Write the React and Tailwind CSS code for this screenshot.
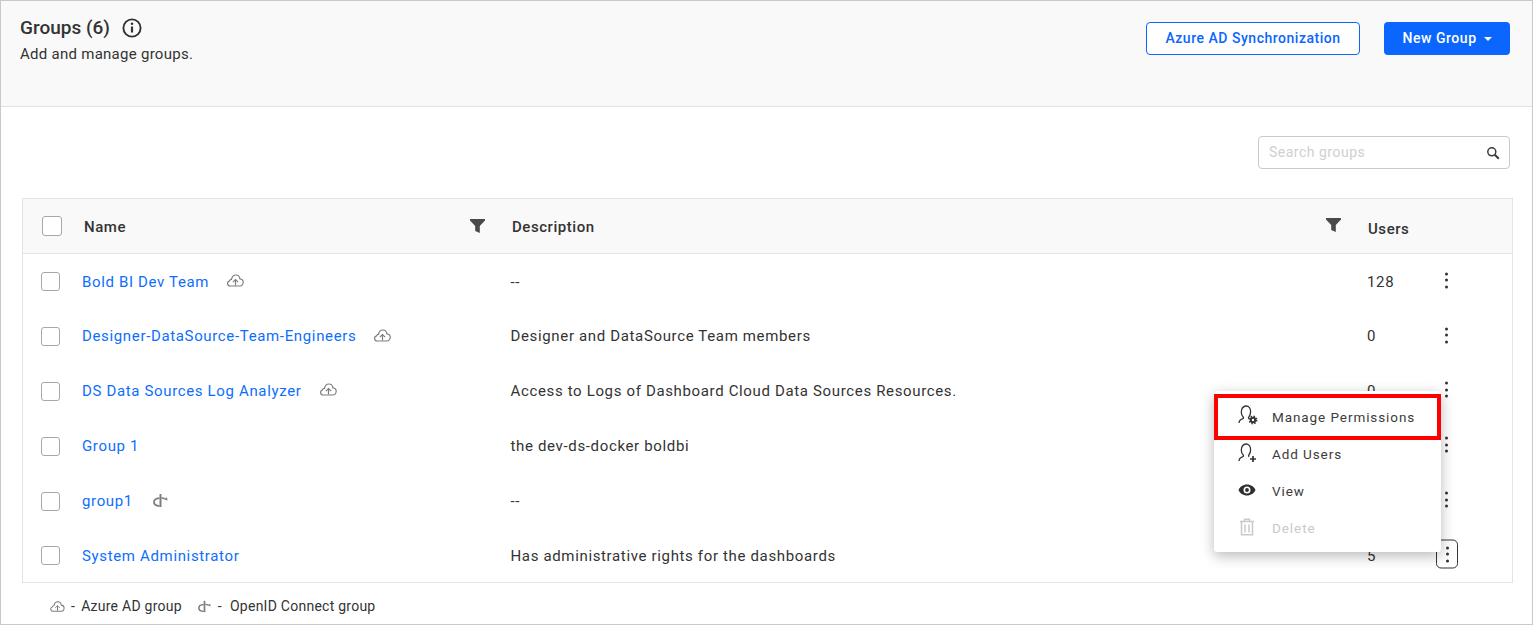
import React from "react";

const groups = [
  { name: "Bold BI Dev Team", type: "azure", description: "--", users: "128" },
  { name: "Designer-DataSource-Team-Engineers", type: "azure", description: "Designer and DataSource Team members", users: "0" },
  { name: "DS Data Sources Log Analyzer", type: "azure", description: "Access to Logs of Dashboard Cloud Data Sources Resources.", users: "0" },
  { name: "Group 1", description: "the dev-ds-docker boldbi", users: "0" },
  { name: "group1", type: "openid", description: "--", users: "0" },
  { name: "System Administrator", description: "Has administrative rights for the dashboards", users: "5", active: true },
];

const AzureIcon = ({ width = 17, height = 14 }) => (
  <svg width={width} height={height} viewBox="0 0 17 14" fill="none" stroke="#7d7d7d" strokeWidth="1.200">
    <path d="M3.300 12a2.600 2.600 0 0 1-.8-5.100C2.800 5.900 3.500 5.300 4.500 5.300 5 2.700 6.700 1 8.800 1c2.200 0 3.800 1.600 4.100 3.800 1.900.2 3.300 1.600 3.300 3.500S14.700 12 12.800 12z" />
    <path d="M8.500 11.500V5.500" strokeWidth="1.200" />
    <path d="M5.800 8.200l2.700-2.700 2.700 2.700" strokeWidth="1.100" />
  </svg>
);

const OpenIdIcon = ({ width = 15, height = 15 }) => (
  <svg width={width} height={height} viewBox="0 0 15 15" fill="none" stroke="#7d7d7d">
    <path d="M7.500 1v13" strokeWidth="2" />
    <path d="M6.500 5.200C3.300 5.500 1 7 1 9.100c0 2.200 2.300 3.800 5.500 4.100" strokeWidth="1.800" />
    <path d="M8.500 5c1.100 0 2.200.2 3.200.6" strokeWidth="1.600" />
    <path d="M14.500 7.500L14 4.300l-3.200 1.900z" fill="#7d7d7d" stroke="none" />
  </svg>
);

const FilterIcon = () => (
  <svg width="15" height="14" viewBox="0 0 15 14" fill="#4a4a4a">
    <path d="M0 0h15v1.500L9.800 7v7L5.200 12V7L0 1.500z" />
  </svg>
);

const Kebab = ({ active }) => (
  <div
    className={
      active
        ? "flex h-[29px] w-[22px] translate-x-[1px] flex-col items-center justify-center gap-[3.500px] rounded-[5px] border border-[#333]"
        : "flex h-[28px] w-[22px] flex-col items-center justify-center gap-[3.500px]"
    }
  >
    <span className="size-[3px] rounded-full bg-[#333]" />
    <span className="size-[3px] rounded-full bg-[#333]" />
    <span className="size-[3px] rounded-full bg-[#333]" />
  </div>
);

const PersonIcon = ({ children }) => (
  <svg width="20" height="20" viewBox="0 0 20 20" fill="none" stroke="#333" strokeWidth="1.300">
    <path d="M1 18c0-2 1.300-3.300 3.800-4.300.8-.4.900-1.100.4-1.700C4 10.800 3.300 9 3.300 7c0-3.300 1.800-6 4.700-6s4.600 2.600 4.600 5.700c0 2-.7 3.900-1.700 5.300-.5.600-.4 1.200.3 1.600" />
    {children}
  </svg>
);

const MenuItem = ({ icon, label, disabled, boxed }) => (
  <div
    className={
      boxed
        ? "-mb-[4px] flex h-[46px] items-center border-[4px] border-[#ff0000] pl-[20px] text-[#3c3c3c]"
        : disabled
          ? "flex h-[37px] items-center pl-[24px] text-[#c9c9c9]"
          : "flex h-[37px] items-center pl-[24px] text-[#3c3c3c]"
    }
  >
    <span className="flex w-[34px] -translate-y-[2px] items-center">{icon}</span>
    <span className="text-[13.500px] tracking-[0.92px]">{label}</span>
  </div>
);

function ActionMenu() {
  return (
    <div className="absolute left-[1213px] top-[390px] z-10 h-[161px] w-[227px] rounded-[3px] bg-white shadow-[0_4px_14px_rgba(0,0,0,0.28)]">
      <div className="pt-[3px]">
        <MenuItem
          boxed
          label="Manage Permissions"
          icon={
            <PersonIcon>
              <circle cx="15" cy="15" r="2.200" strokeWidth="2" />
              <circle cx="15" cy="15" r="3.800" strokeWidth="1.300" strokeDasharray="1.500 1.500" />
            </PersonIcon>
          }
        />
        <MenuItem
          label="Add Users"
          icon={
            <PersonIcon>
              <path d="M15 13v6M12 16h6" strokeWidth="1.700" />
            </PersonIcon>
          }
        />
        <MenuItem
          label="View"
          icon={
            <svg width="18" height="12" viewBox="0 0 18 12">
              <path
                fillRule="evenodd"
                fill="#2f2f2f"
                d="M9 .5C5 .5 2 2.800.5 6 2 9.200 5 11.500 9 11.500s7-2.300 8.500-5.500C16 2.800 13 .5 9 .5zM9 9.500a3.500 3.500 0 1 1 0-7 3.500 3.500 0 0 1 0 7z"
              />
              <circle cx="9" cy="6" r="1.900" fill="#2f2f2f" />
            </svg>
          }
        />
        <MenuItem
          disabled
          label="Delete"
          icon={
            <span className="ml-[1px]">
              <svg width="16" height="18" viewBox="0 0 16 18" fill="none" stroke="#c9c9c9" strokeWidth="1.500">
                <path d="M1 3.500h14M5.500 3V1.200h5V3M2.500 4v12.800h11V4M6 6.500v8M10 6.500v8" />
              </svg>
            </span>
          }
        />
      </div>
    </div>
  );
}

function GroupRow({ group }) {
  return (
    <div className="flex h-[54.800px] items-center text-[15px] tracking-[0.65px] text-[#333]">
      <div className="flex w-[59px] justify-center pr-[4px]">
        <span className="size-[19px] rounded-[3px] border border-[#a8a8a8] bg-white" />
      </div>
      <div className="flex w-[428.500px] items-center">
        <span className="text-[#0d6efd]">{group.name}</span>
        {group.type === "azure" && (
          <span className="ml-[18px] -translate-y-[1px]">
            <AzureIcon />
          </span>
        )}
        {group.type === "openid" && (
          <span className="ml-[20px] -translate-y-[1px]">
            <OpenIdIcon />
          </span>
        )}
      </div>
      <div className="w-[856.500px]">{group.description}</div>
      <div className="w-[68px]">{group.users}</div>
      <div className="-translate-y-[1.500px]">
        <Kebab active={group.active} />
      </div>
    </div>
  );
}

export default function App() {
  return (
    <div className="relative h-[625px] w-[1533px] overflow-hidden border border-[#c9c9c9] bg-white font-['Roboto',sans-serif] text-[#333]">
      <header className="flex h-[106px] justify-between border-b border-[#e0e0e0] bg-[#f9f9f9] pl-[19px] pr-[22px] pt-[14px]">
        <div>
          <div className="flex items-center gap-[12px]">
            <h1 className="text-[19px] font-medium leading-[26px]">Groups (6)</h1>
            <svg width="20" height="20" viewBox="0 0 20 20" fill="none" stroke="#333" strokeWidth="1.900">
              <circle cx="10" cy="10" r="8.600" />
              <path d="M10 8.500v6" strokeWidth="2.200" />
              <circle cx="10" cy="5.800" r="1.300" fill="#333" stroke="none" />
            </svg>
          </div>
          <p className="mt-[2px] text-[15px] leading-[22px] tracking-[0.27px]">Add and manage groups.</p>
        </div>
        <div className="flex gap-[24px] pt-[7px]">
          <button className="h-[33px] w-[214px] rounded-[4px] border border-[#0a66ff] bg-white text-[14px] font-medium tracking-[0.52px] text-[#0a66ff]">
            Azure AD Synchronization
          </button>
          <button className="flex h-[33px] w-[126px] items-center justify-center gap-[7px] rounded-[4px] bg-[#0a66ff] text-[14px] font-medium tracking-[0.55px] text-white">
            New Group
            <span className="mt-[1px] border-x-[4px] border-t-[4px] border-x-transparent border-t-white" />
          </button>
        </div>
      </header>

      <div className="flex justify-end pr-[22px] pt-[29px]">
        <div className="flex h-[33px] w-[252px] items-center justify-between rounded-[4px] border border-[#c9c9c9] bg-white pl-[10px] pr-[9px]">
          <span className="text-[14px] tracking-[0.5px] text-[#cfcfcf]">Search groups</span>
          <svg width="14" height="14" viewBox="0 0 14 14" fill="none" stroke="#3a3a3a">
            <circle cx="5.800" cy="5.800" r="4" strokeWidth="1.500" />
            <path d="M8.800 8.800l4 4" strokeWidth="2" />
          </svg>
        </div>
      </div>

      <div className="ml-[21px] mt-[29px] h-[385px] w-[1491px] border border-[#e3e3e3]">
        <div className="flex h-[55px] items-center border-b border-[#e3e3e3] bg-[#f9f9f9] text-[15px] font-medium tracking-[0.55px] text-[#333]">
          <div className="flex w-[61px] justify-center pr-[3px]">
            <span className="size-[20px] rounded-[3px] border border-[#a8a8a8] bg-white" />
          </div>
          <div className="flex w-[428px] items-center justify-between pr-[27px]">
            <span className="translate-y-[1px]">Name</span>
            <FilterIcon />
          </div>
          <div className="flex w-[856px] items-center justify-between pr-[27px]">
            <span className="translate-y-[1px]">Description</span>
            <span className="-translate-y-[1px]">
              <FilterIcon />
            </span>
          </div>
          <div className="translate-y-[3px]">Users</div>
        </div>
        <div className="pt-[0.5px]">
          {groups.map((group) => (
            <GroupRow key={group.name} group={group} />
          ))}
        </div>
      </div>

      <div className="flex items-center pl-[49px] pt-[13px] text-[14px] tracking-[0.25px] text-[#333]">
        <AzureIcon width={15} height={12} />
        <span className="ml-[6px]">-</span>
        <span className="ml-[6px]">Azure AD group</span>
        <span className="ml-[16px]">
          <OpenIdIcon width={13} height={13} />
        </span>
        <span className="ml-[7px]">-</span>
        <span className="ml-[8px]">OpenID Connect group</span>
      </div>

      <ActionMenu />
    </div>
  );
}
